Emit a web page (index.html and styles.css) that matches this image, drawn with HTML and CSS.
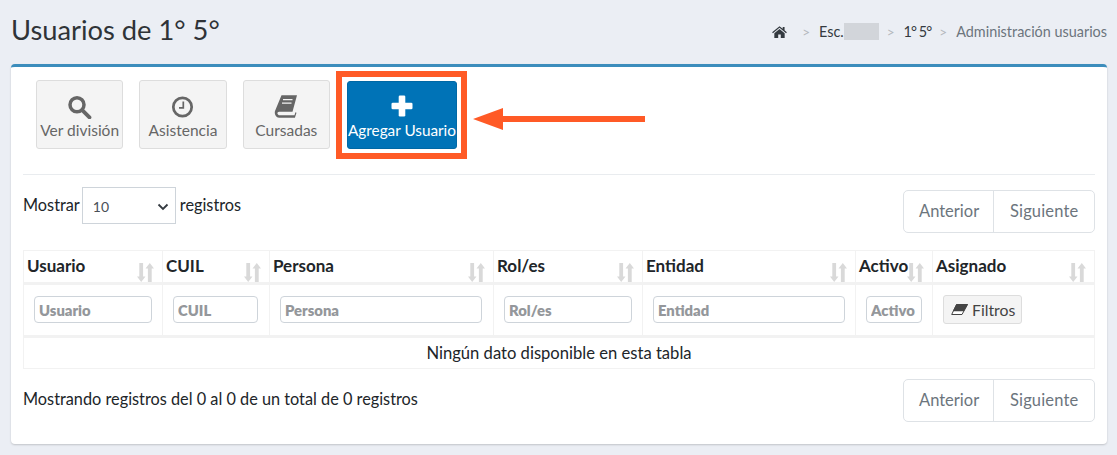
FILE: index.html
```html
<!DOCTYPE html>
<html lang="es">
<head>
<meta charset="utf-8">
<title>Usuarios de 1° 5°</title>
<link rel="stylesheet" href="styles.css">
</head>
<body>
<header class="page-head">
  <h1 class="title">Usuarios de 1° 5°</h1>
  <nav class="crumbs">
    <svg class="home" viewBox="0 0 16 13"><path d="M8 .2 0 6.800l.9 1L8 2l7.100 5.800.9-1-2.500-2.100V1h-2v2z"/><path d="M8 3.200 2.400 7.800V13h4.200V9.200h2.800V13h4.200V7.800z"/></svg>
    <span class="sep">&gt;</span>
    <span class="crumb">Esc.<span class="redact"></span></span>
    <span class="sep">&gt;</span>
    <span class="crumb tight">1° 5°</span>
    <span class="sep">&gt;</span>
    <span class="crumb muted">Administración usuarios</span>
  </nav>
</header>
<main class="card">
  <div class="actions">
    <a class="tile">
      <svg class="ico" viewBox="0 0 24 24"><circle cx="9" cy="9.800" r="7" fill="none" stroke="currentColor" stroke-width="3.500"/><path d="m14.500 15.300 7 7" stroke="currentColor" stroke-width="3.800" stroke-linecap="round"/></svg>
      Ver división
    </a>
    <a class="tile">
      <svg class="ico" viewBox="0 0 24 24"><circle cx="11.500" cy="12" r="9.200" fill="none" stroke="currentColor" stroke-width="2.700"/><path d="M12.300 6.500v6.300H8" fill="none" stroke="currentColor" stroke-width="1.700"/></svg>
      Asistencia
    </a>
    <a class="tile">
      <svg class="ico" viewBox="0 0 24 24"><g transform="translate(0 -.8)"><path d="M7.500 1H23l-4.500 16.500H5.200c-1.500 0-2 1-1.700 2 .3.900 1 1.500 2.200 1.500h14.800l.9-3 1.100.6-1.600 4.900H5.500C3 23.500 1 21.500.8 19c-.1-.8 0-1.500.2-2.200z"/><path d="M9 5.500h9.500M8 9h9.500" stroke="#f4f4f4" stroke-width="1.300"/></g></svg>
      Cursadas
    </a>
    <a class="tile primary">
      <svg class="ico" viewBox="0 0 24 24"><rect x="8.700" y=".5" width="6.600" height="21" rx="1.300"/><rect x="1.500" y="7.700" width="21" height="6.600" rx="1.300"/></svg>
      Agregar Usuario
    </a>
    <span class="frame"></span>
    <svg class="arrow" viewBox="0 0 172 22"><path d="M0 11 30 0v8h142v6H30v8z"/></svg>
  </div>

  <div class="toolbar">
    <label class="length">Mostrar
      <span class="select">10<svg viewBox="0 0 12 8"><path d="M1.500 1.500 6 6l4.500-4.500" fill="none" stroke="currentColor" stroke-width="1.800"/></svg></span>
      registros</label>
    <div class="pager"><span>Anterior</span><span>Siguiente</span></div>
  </div>

  <table class="grid">
    <colgroup>
      <col class="c1"><col class="c2"><col class="c3"><col class="c4"><col class="c5"><col class="c6"><col class="c7">
    </colgroup>
    <thead>
      <tr class="heads">
        <th>Usuario<svg class="sort" viewBox="0 0 17 19"><path d="M2.300 0h3.800v13.500h2.400L4.200 19 0 13.500h2.300zM10.900 5.500H8.500L12.800 0 17 5.500h-2.300V19h-3.800z"/></svg></th>
        <th>CUIL<svg class="sort" viewBox="0 0 17 19"><path d="M2.300 0h3.800v13.500h2.400L4.200 19 0 13.500h2.300zM10.900 5.500H8.500L12.800 0 17 5.500h-2.300V19h-3.800z"/></svg></th>
        <th>Persona<svg class="sort" viewBox="0 0 17 19"><path d="M2.300 0h3.800v13.500h2.400L4.200 19 0 13.500h2.300zM10.900 5.500H8.500L12.800 0 17 5.500h-2.300V19h-3.800z"/></svg></th>
        <th>Rol/es<svg class="sort" viewBox="0 0 17 19"><path d="M2.300 0h3.800v13.500h2.400L4.200 19 0 13.500h2.300zM10.900 5.500H8.500L12.800 0 17 5.500h-2.300V19h-3.800z"/></svg></th>
        <th>Entidad<svg class="sort" viewBox="0 0 17 19"><path d="M2.300 0h3.800v13.500h2.400L4.200 19 0 13.500h2.300zM10.900 5.500H8.500L12.800 0 17 5.500h-2.300V19h-3.800z"/></svg></th>
        <th>Activo<svg class="sort" viewBox="0 0 17 19"><path d="M2.300 0h3.800v13.500h2.400L4.200 19 0 13.500h2.300zM10.900 5.500H8.500L12.800 0 17 5.500h-2.300V19h-3.800z"/></svg></th>
        <th>Asignado<svg class="sort" viewBox="0 0 17 19"><path d="M2.300 0h3.800v13.500h2.400L4.200 19 0 13.500h2.300zM10.900 5.500H8.500L12.800 0 17 5.500h-2.300V19h-3.800z"/></svg></th>
      </tr>
      <tr class="filters">
        <td><input class="fld" placeholder="Usuario"></td>
        <td><input class="fld" placeholder="CUIL"></td>
        <td><input class="fld" placeholder="Persona"></td>
        <td><input class="fld" placeholder="Rol/es"></td>
        <td><input class="fld" placeholder="Entidad"></td>
        <td><input class="fld" placeholder="Activo"></td>
        <td><button class="clear"><svg viewBox="0 0 17 11"><path d="M5.500.5h11L11 10.500H.7z" fill="#fff" stroke="currentColor" stroke-width="1"/><path d="M5.500 0H17l-4 7.300H1.800z"/></svg>Filtros</button></td>
      </tr>
    </thead>
    <tbody>
      <tr class="empty"><td colspan="7">Ningún dato disponible en esta tabla</td></tr>
    </tbody>
  </table>

  <div class="footer">
    <p class="info">Mostrando registros del 0 al 0 de un total de 0 registros</p>
    <div class="pager"><span>Anterior</span><span>Siguiente</span></div>
  </div>
</main>
</body>
</html>
```
FILE: styles.css
```css
* { box-sizing: border-box; }
html, body { height: 100%; }
body {
  margin: 0;
  overflow: hidden;
  padding: 0 10px 0 11px;
  background: #ebeef4;
  color: #212529;
  font-family: Lato, "Noto Sans", sans-serif;
  font-size: 16.300px;
}
.page-head {
  height: 64px;
  display: flex;
  align-items: flex-start;
  justify-content: space-between;
  padding-top: 13px;
}
.title {
  margin: 0;
  font-size: 27.300px;
  font-weight: 400;
  line-height: 33px;
  color: #2f3337;
}
.crumbs {
  display: flex;
  align-items: center;
  height: 17px;
  margin-top: 10px;
  font-size: 14.400px;
  color: #343a40;
}
.home { width: 15px; height: 12px; fill: #343a40; margin-right: 15px; }
.sep { color: #b4b8bd; font-size: 13.500px; margin-right: 9px; }
.crumb { margin-right: 8px; display: flex; align-items: center; }
.crumb.tight { letter-spacing: -.9px; margin-right: 8px; }
.crumb.muted { color: #6c757d; margin-right: 0; }
.redact { width: 35px; height: 17px; background: #d2d5da; }
.card {
  height: 380px;
  position: relative;
  background: #fff;
  border-top: 3px solid #3c8dbc;
  border-radius: 4px;
  box-shadow: 0 1px 2px rgba(0,0,0,.18);
  padding: 13px 12px 0;
}
.actions {
  display: flex;
  gap: 16px;
  padding: 0 0 25px 13px;
  border-bottom: 1px solid #e9ecef;
  position: relative;
}
.tile {
  width: 87.330px;
  height: 69px;
  display: flex;
  flex-direction: column;
  align-items: center;
  padding-top: 14px;
  background: #f4f4f4;
  border: 1px solid #ddd;
  border-radius: 3px;
  color: #666;
  font-size: 15.500px;
  line-height: 19px;
  white-space: nowrap;
}
.ico { width: 24px; height: 24px; fill: currentColor; margin-bottom: 2px; flex: none; }
.tile.primary {
  width: 110px;
  margin: 1px 0 0 1px;
  height: 68px;
  padding-top: 13px;
  background: #0073b7;
  border-color: #0068a5;
  color: #fff;
  font-size: 15.300px;
}
.frame {
  position: absolute;
  left: 313px;
  top: -9px;
  width: 131px;
  height: 88px;
  border: 6px solid #ff5a26;
}
.arrow {
  position: absolute;
  left: 450px;
  top: 28px;
  width: 172px;
  height: 22px;
  fill: #ff5a26;
}
.toolbar {
  display: flex;
  justify-content: space-between;
  align-items: flex-start;
  padding-top: 12px;
  height: 75px;
}
.length { display: flex; align-items: flex-start; gap: 2px; line-height: 36px; }
.select {
  width: 94px;
  height: 37px;
  display: flex;
  align-items: center;
  justify-content: space-between;
  margin-right: 2px;
  padding: 2px 6px 0 10px;
  border: 1px solid #ced4da;
  font-size: 14px;
  line-height: 20px;
  color: #495057;
}
.select svg { width: 12px; height: 8px; color: #343a40; }
.pager {
  display: flex;
  height: 43px;
  margin-top: 3px;
  border: 1px solid #dee2e6;
  border-radius: 5px;
  color: #6c757d;
  font-size: 16.500px;
}
.pager span { display: flex; align-items: center; padding: 0 0 2px 15px; }
.pager span:first-child { border-right: 1px solid #dee2e6; width: 90px; }
.pager span:last-child { width: 100px; padding-left: 16px; letter-spacing: .15px; }
.grid {
  width: 1072px;
  table-layout: fixed;
  border-collapse: separate;
  border-spacing: 0;
  border: 1px solid #f2f2f2;
}
.c1 { width: 139px; }
.c2 { width: 107px; }
.c3 { width: 224px; }
.c4 { width: 149px; }
.c5 { width: 213px; }
.c6 { width: 77px; }
.c7 { width: 161px; }
.grid th, .grid td { border-right: 1px solid #f2f2f2; }
.grid th:last-child, .grid td:last-child { border-right: 0; }
.heads th {
  height: 34px;
  padding: 0 3px 2px;
  text-align: left;
  font-size: 17px;
  font-weight: 700;
  color: #212529;
  border-bottom: 3px solid #f2f2f2;
  position: relative;
  white-space: nowrap;
}
.sort {
  position: absolute;
  right: 8px;
  top: 12px;
  width: 17px;
  height: 19px;
  fill: #d9d9d9;
}
.filters td {
  height: 53px;
  padding: 0 10px 1px;
  border-bottom: 3px solid #f2f2f2;
}
.fld {
  display: block;
  width: 100%;
  height: 27px;
  padding: 0 4px;
  border: 1px solid #ced4da;
  border-radius: 4px;
  background: #fff;
  font: 800 14.800px Lato, "Noto Sans", sans-serif;
  outline: none;
}
.fld::placeholder { color: #94979b; opacity: 1; }
.filters td:nth-child(2) .fld { width: 85px; }
.filters td:nth-child(3) .fld { width: 202px; }
.filters td:nth-child(6) .fld { width: 56px; }
.clear {
  display: flex;
  align-items: center;
  gap: 4px;
  width: 79px;
  height: 29px;
  padding: 0 0 0 7px;
  background: #f4f4f4;
  border: 1px solid #ddd;
  border-radius: 3px;
  color: #444;
  font: 400 15.800px Lato, "Noto Sans", sans-serif;
}
.clear svg { width: 17px; height: 11px; fill: currentColor; flex: none; }
.empty td {
  height: 30px;
  padding: 0;
  font-size: 16.600px;
  text-align: center;
}
.footer {
  display: flex;
  justify-content: space-between;
  align-items: flex-start;
  padding-top: 10px;
}
.info { margin: 0; line-height: 40px; }
.footer .pager { margin-top: 0; }
```
